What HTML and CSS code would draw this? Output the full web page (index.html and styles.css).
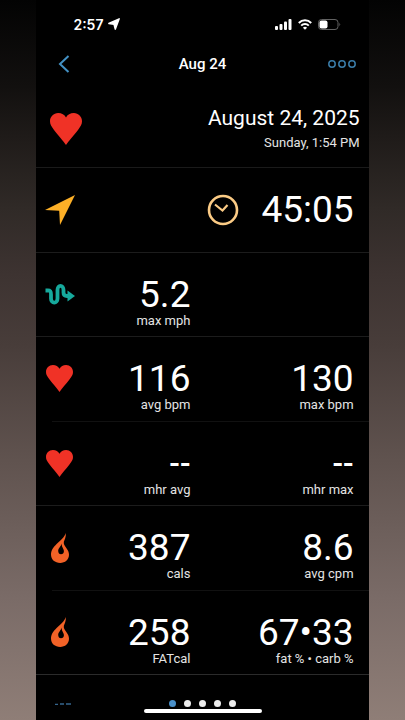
FILE: index.html
```html
<!DOCTYPE html>
<html lang="en">
<head>
<meta charset="utf-8">
<meta name="viewport" content="width=device-width, initial-scale=1">
<title>Aug 24</title>
<link rel="stylesheet" href="styles.css">
</head>
<body>
<svg class="defs" aria-hidden="true">
  <symbol id="heart" viewBox="0 0 32 32"><path d="M16 32C13.500 28 8 22.500 4 17C1.500 13.600 0 11.500 0 8.300C0 3.700 3.600 0 8.200 0C11.700 0 14.600 1.600 16 4.400C17.400 1.600 20.300 0 23.800 0C28.400 0 32 3.700 32 8.300C32 11.500 30.500 13.600 28 17C24 22.500 18.500 28 16 32Z" fill="#f03226"/></symbol>
  <symbol id="flame" viewBox="0 0 18 30"><path d="M14.800 0C15.200 4 13.600 6.500 12.900 8.600C12.300 11 13.600 12.600 15.300 15C17 17.300 18 19.200 18 21.800C18 26.700 14 30 9.200 30C4 30 0 26.800 0 21.600C0 17 2.600 14.200 5.600 11C9.200 7.300 13.200 5 14.800 0ZM10.600 10.500C9.800 14 7.200 15 7.200 18C7.200 20 8.400 21.300 10 21.300C11.700 21.300 12.900 20 12.900 18.200C12.900 15.600 10.600 14.500 10.600 10.500Z" fill="#f26227" fill-rule="evenodd"/></symbol>
</svg>
<div class="screen">
  <div class="status">
    <div class="status-group">
      <span>2:57</span>
      <svg width="12" height="12" viewBox="0 0 12 12"><path d="M11.200.8L7.300 11.200L6 6.200L.8 5.500Z" fill="#fff" stroke="#fff" stroke-width="1.400" stroke-linejoin="round"/></svg>
    </div>
    <div class="status-group icons">
      <svg width="17" height="11" viewBox="0 0 17 11" fill="#fff"><rect y="7" width="3" height="4" rx="1"/><rect x="4.500" y="5" width="3" height="6" rx="1"/><rect x="9" y="2.500" width="3" height="8.500" rx="1"/><rect x="13.500" width="3" height="11" rx="1"/></svg>
      <svg width="14" height="11" viewBox="0 0 14 11" fill="none" stroke="#fff" stroke-width="2"><path d="M.8 4C4.300.3 9.700.3 13.200 4M3.200 6.600C5.300 4.500 8.700 4.500 10.800 6.600"/><path d="M7 10.800L4.900 8.700Q7 7 9.100 8.700Z" fill="#fff" stroke="none"/></svg>
      <svg width="23" height="11" viewBox="0 0 23 11"><rect x=".5" y=".5" width="19.500" height="10" rx="3" fill="none" stroke="#626262"/><rect x="1.500" y="1.500" width="8" height="8" rx="2" fill="#fff"/><path d="M21.500 3.800Q23 5.500 21.500 7.200Z" fill="#777"/></svg>
    </div>
  </div>
  <header class="nav">
    <button class="back" type="button" aria-label="Back"><svg width="12" height="18" viewBox="0 0 12 18"><path d="M10.500 1L2 9L10.500 17" fill="none" stroke="#4391c4" stroke-width="2"/></svg></button>
    <h1>Aug 24</h1>
    <button class="more" type="button" aria-label="More"><svg width="28" height="8" viewBox="0 0 28 8" fill="none" stroke="#3a7ca8" stroke-width="1.500"><circle cx="4" cy="4" r="3.200"/><circle cx="14" cy="4" r="3.200"/><circle cx="24" cy="4" r="3.200"/></svg></button>
  </header>
  <section class="summary">
    <svg width="32" height="32"><use href="#heart"/></svg>
    <div class="date">
      <h2>August 24, 2025</h2>
      <p>Sunday, 1:54 PM</p>
    </div>
  </section>
  <main class="stats">
    <section class="row">
      <svg class="icon" width="30" height="30" viewBox="0 0 30 30"><path d="M30 0L15 30L14.200 15.800L0 15Z" fill="#fdb027"/></svg>
      <div class="stat wide duration">
        <svg width="32" height="32" viewBox="0 0 32 32" fill="none" stroke="#fbcb85" stroke-width="2.600"><circle cx="16" cy="16" r="14"/><path d="M8 10.500L15.500 16.500L20.500 11" stroke-width="2.200"/></svg>
        <strong>45:05</strong>
      </div>
    </section>
    <section class="row">
      <svg class="icon" width="30" height="22" viewBox="0 0 30 22"><path d="M.5 7.500H3C5.800 7.500 6 8.800 6 11.500V15.500C6 21 12.500 21 12.500 15.500V7C12.500 1.500 18.500 1.500 18.500 7V9.500C18.500 12 19.500 13 22 13H24" fill="none" stroke="#16a99c" stroke-width="3.800"/><path d="M22.500 7.500L30 13L22.500 18.500Z" fill="#16a99c"/></svg>
      <div class="stat"><strong>5.2</strong><span>max mph</span></div>
    </section>
    <section class="row inset">
      <svg class="icon" width="27" height="27"><use href="#heart"/></svg>
      <div class="stat"><strong>116</strong><span>avg bpm</span></div>
      <div class="stat"><strong>130</strong><span>max bpm</span></div>
    </section>
    <section class="row">
      <svg class="icon" width="27" height="27"><use href="#heart"/></svg>
      <div class="stat"><strong class="empty">--</strong><span>mhr avg</span></div>
      <div class="stat"><strong class="empty">--</strong><span>mhr max</span></div>
    </section>
    <section class="row inset">
      <svg class="icon" width="18" height="30"><use href="#flame"/></svg>
      <div class="stat"><strong>387</strong><span>cals</span></div>
      <div class="stat"><strong>8.6</strong><span>avg cpm</span></div>
    </section>
    <section class="row last">
      <svg class="icon" width="18" height="30"><use href="#flame"/></svg>
      <div class="stat"><strong>258</strong><span>FATcal</span></div>
      <div class="stat"><strong>67•33</strong><span>fat % • carb %</span></div>
    </section>
  </main>
  <footer class="bottom">
    <svg class="peek" width="16" height="2" viewBox="0 0 16 2"><path d="M0 1.500H3M5 1H9M11 1H16" stroke="#35658d" stroke-width="1.500"/></svg>
    <div class="dots"><i class="current"></i><i></i><i></i><i></i><i></i></div>
    <div class="home"></div>
  </footer>
</div>
</body>
</html>
```
FILE: styles.css
```css
* {
  box-sizing: border-box;
}

body {
  margin: 0;
  min-height: 100vh;
  padding: 0 9%;
  background: linear-gradient(#030303 0%, #12100f 12%, #1f1b19 19%, #302a27 29%, #3d3331 38%, #483d3a 48%, #60534f 64%, #7a6b67 83%, #8f7e77 100%);
  color: #fff;
  font-family: Roboto, "Liberation Sans", sans-serif;
}

svg {
  display: block;
  flex: none;
}

.defs {
  position: absolute;
  width: 0;
  height: 0;
}

h1, h2, p {
  margin: 0;
}

button {
  padding: 0;
  border: 0;
  background: none;
  cursor: pointer;
}

.screen {
  display: flex;
  flex-direction: column;
  min-height: 100vh;
  background: #000;
}

.status {
  display: flex;
  justify-content: space-between;
  align-items: center;
  height: 48px;
  padding: 0 28px 0 37px;
}

.status-group {
  display: flex;
  align-items: center;
  gap: 4px;
  font-family: Inter, Roboto, sans-serif;
  font-size: 14px;
  font-weight: 600;
}

.icons {
  gap: 6px;
}

.nav {
  display: grid;
  grid-template-columns: 1fr auto 1fr;
  align-items: center;
  height: 32px;
  padding: 0 13px;
}

.nav h1 {
  font-size: 15px;
  font-weight: 500;
}

.nav .back {
  justify-self: start;
  padding: 0 9px;
}

.nav .more {
  justify-self: end;
}

.summary {
  display: flex;
  justify-content: space-between;
  align-items: center;
  height: 88px;
  padding: 11px 9px 0 14px;
  border-bottom: 1px solid #1a1a1a;
}

.date {
  text-align: right;
}

.date h2 {
  font-size: 21px;
  font-weight: 400;
  line-height: 28px;
}

.date p {
  color: #e4e4e4;
  font-size: 13px;
  line-height: 22px;
}

.stats {
  display: flex;
  flex: 1;
  flex-direction: column;
}

.row {
  display: grid;
  flex: 1;
  grid-template-columns: 47px 107px 1fr;
  min-height: 84px;
  padding-right: 15px;
  border-bottom: 1px solid #1c1c1c;
}

.row.inset {
  border-image: linear-gradient(to right, #000 5%, #111 5%) 1;
}

.row.last {
  border-color: #2b2b2b;
}

.icon {
  place-self: center;
}

.stat {
  display: flex;
  flex-direction: column;
  align-items: flex-end;
  padding-top: 24px;
}

.stat strong {
  font-size: 37px;
  font-weight: 400;
  line-height: 36px;
}

.stat .empty {
  font-size: 31px;
  font-weight: 500;
}

.stat span {
  color: #e4e4e4;
  font-size: 13px;
  line-height: 16px;
}

.wide {
  grid-column: 2 / 4;
}

.duration {
  flex-direction: row;
  justify-content: flex-end;
  align-items: flex-start;
  gap: 22px;
}

.duration svg {
  margin-top: 2px;
}

.bottom {
  display: grid;
  grid-template-columns: 1fr auto 1fr;
  justify-items: center;
  align-content: end;
  align-items: center;
  gap: 2px 0;
  height: 45px;
  padding-bottom: 7px;
}

.peek {
  justify-self: start;
  margin-left: 19px;
}

.dots {
  display: flex;
  gap: 8px;
}

.dots i {
  width: 7px;
  height: 7px;
  border-radius: 50%;
  background: #ececec;
}

.dots .current {
  background: #4a90c9;
}

.home {
  grid-column: 1 / 4;
  width: 118px;
  height: 4px;
  border-radius: 2px;
  background: #fff;
}
```
